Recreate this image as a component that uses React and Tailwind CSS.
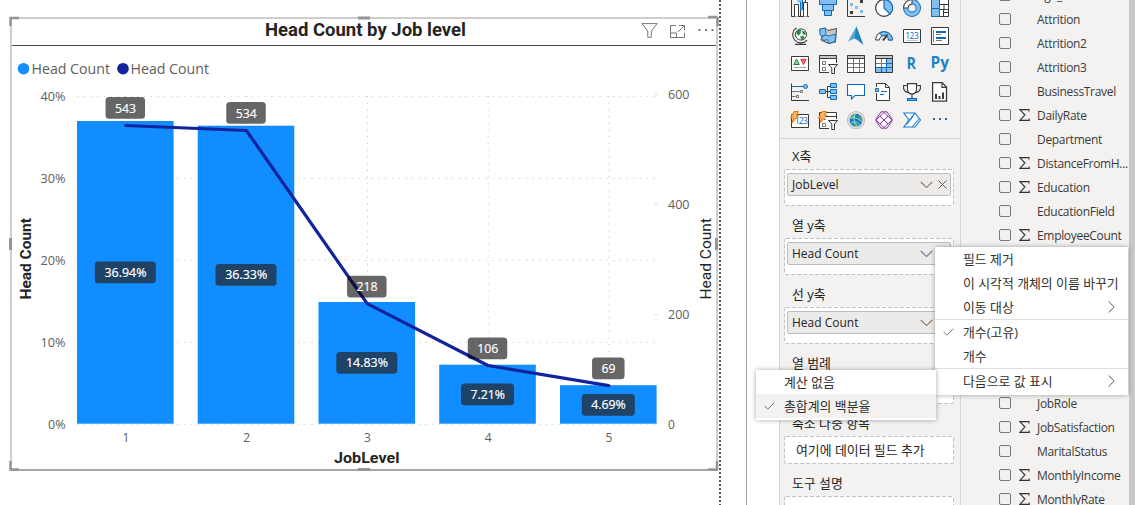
import React from "react";

const UI = "font-['Open_Sans','Noto_Sans_CJK_KR',sans-serif]";
const DARK = "#3b3a39";
const BLUE = "#0f6cbd";
const LIGHT = "#83beec";

/* ---------- visualization gallery icons (18 x 18) ---------- */

const galleryIcons = [
  // ribbon / column
  <g fill="#fff" stroke={DARK}>
    <path d="M.5-1V17.5H18" fill="none" />
    <path d="M3.5 17.5V5.5H7.5V17.5M12.5 17.5V3.5H16.5V17.5M9.5 17.5V11" />
    <path d="M6.5-1H11.5V10H9.5V3.5H6.5Z" fill={LIGHT} stroke="none" />
    <path d="M9.5 3V10.5H11.5V-1" fill="none" stroke={BLUE} />
    <path d="M14.5-1V3.5" />
  </g>,
  // funnel
  <g fill={LIGHT} stroke={BLUE}>
    <path d="M.5-1H17.5V5.5H.5ZM3.5 5.5H14.5V11.5H3.5ZM5.5 11.5H12.5V16.5H5.5Z" />
  </g>,
  // scatter
  <g>
    <path d="M.5 0V17.5H18" fill="none" stroke={DARK} />
    <path d="M13 1h3v3h-3ZM3 12h3v3H3Z" fill={DARK} />
    <path d="M3 4h3v3H3ZM8 7h3v3H8ZM13 11h3v3h-3Z" fill={LIGHT} />
  </g>,
  // pie
  <g stroke={DARK} strokeWidth="1.2">
    <circle cx="9" cy="9" r="8.4" fill="#fff" />
    <path d="M9 .6A8.4 8.4 0 0 1 15 15L9 9Z" fill={LIGHT} stroke={BLUE} />
  </g>,
  // donut
  <g>
    <circle cx="9" cy="9" r="6.3" fill="none" stroke={BLUE} strokeWidth="5.4" />
    <circle cx="9" cy="9" r="6.3" fill="none" stroke={LIGHT} strokeWidth="3.4" />
    <path d="M.6 9A8.4 8.4 0 0 1 9 .6V5A4 4 0 0 0 5 9Z" fill="#fff" stroke={DARK} />
  </g>,
  // treemap
  <g fill="#fff" stroke={DARK}>
    <path d="M.5 .5H17.5V17.5H.5ZM8.5 5.5H17.5M8.5 5V17M13 5.5V10M8.5 10.5H17.5M12.5 10V17M12.5 13.5H17" />
    <path d="M.5-1H8.5V17.5H.5ZM.5 9.5H8.5" fill={LIGHT} stroke={BLUE} />
  </g>,
  // map globe
  <g fill="none" stroke={DARK}>
    <circle cx="10" cy="7.5" r="5.6" fill="#fff" />
    <path d="M7 3.2 10 3 9.5 6 7.5 8.5 5.5 6ZM11.5 4 14 5 14.5 7.5 12 7ZM9.5 9.5 13 9 12.5 12 10.5 12.5Z" fill="#22843f" stroke="#22843f" strokeWidth=".5" />
    <path d="M5.5 .8A8.2 8.2 0 1 0 16 13.2M9 15.5V17M4 17.4H15" strokeWidth="1.1" />
  </g>,
  // filled map
  <g stroke={DARK} strokeWidth=".9">
    <path d="M.5 2.5 6 1 9 3.5 17.5 1.5 16.5 15 9.5 16.5 2 13 3 8.5Z" fill="#c8c6c4" />
    <path d="M.8 2 6 1 7 6.5 4 9.5 1 8ZM10 9 16.8 7 16 14.5 10 16.5 8.5 12.5 5 13.5 2 11 6 8Z" fill={LIGHT} stroke={BLUE} />
  </g>,
  // azure map
  <g>
    <path d="M9.5-.8 1 14.5 9.5 10.5Z" fill="#50a8d8" />
    <path d="M9.5-.8 16.5 18 9.5 12.5 7.5 11.5Z" fill="#2086c4" />
  </g>,
  // gauge
  <g strokeWidth="1">
    <path d="M.6 13A8.4 8.4 0 0 1 17.4 13L13.5 13A4.5 4.5 0 0 0 4.5 13Z" fill="#fff" stroke={DARK} />
    <path d="M4.5 6A8.4 8.4 0 0 1 17.4 13H13.5A4.5 4.5 0 0 0 7 9Z" fill={LIGHT} stroke={BLUE} />
    <path d="M8 13.5 12.5 7.5" stroke={DARK} strokeWidth="2" />
  </g>,
  // card
  <g>
    <path d="M.5 2.5H17.5V15.5H.5Z" fill="#fff" stroke={DARK} />
    <text x="9" y="12" textAnchor="middle" fontSize="8.5" textLength="13.5" fontFamily="Open Sans" fill={BLUE}>123</text>
    <path d="M3 13.5H15" stroke="#a19f9d" strokeWidth=".6" />
  </g>,
  // multi-row card
  <g>
    <path d="M.5 .5H17.5V17.5H.5Z" fill="#fff" stroke={DARK} />
    <path d="M2.5 3V15" stroke="#797775" />
    <path d="M5 5H15M5 11H15" stroke={BLUE} strokeWidth="2" />
    <path d="M5 7.5H10M5 13.5H11" stroke="#797775" />
  </g>,
  // kpi
  <g>
    <path d="M.5 1.5H17.5V15.5H.5Z" fill="#fff" stroke={DARK} />
    <path d="M5.5 4 8.3 9.5H2.7Z" fill="#8fcf9f" stroke="#22843f" />
    <path d="M12.5 9.5 9.8 4.3H15.2Z" fill="#f1707b" stroke="#d13438" />
    <path d="M3 12.5H15" stroke="#797775" strokeWidth=".7" />
  </g>,
  // slicer
  <g fill="#fff" stroke={DARK}>
    <path d="M10 17.5H.5V.5H17.5V8" />
    <path d="M.5 .5H17.5V3.5H.5Z" fill="#c8c6c4" />
    <path d="M3.5 6.5H6.5V9.5H3.5ZM3.5 12.5H6.5V15.5H3.5Z" fill="#fff" stroke="#797775" />
    <path d="M9.5 9.5H18.5L15.5 13V18.5H12.8V13Z" />
  </g>,
  // table
  <g fill="#fff" stroke={DARK}>
    <path d="M.5 .5H17.5V17.5H.5Z" />
    <path d="M.5 .5H17.5V3.5H.5Z" fill="#c8c6c4" />
    <path d="M6.5 4V17M12.5 4V17M1 8.5H17M1 12.5H17" stroke="#797775" />
  </g>,
  // matrix
  <g fill="#fff" stroke={DARK}>
    <path d="M.5 .5H17.5V17.5H.5Z" />
    <path d="M12 4H17V17H1V12.5H12Z" fill={LIGHT} stroke="none" />
    <path d="M.5 .5H17.5V3.5H.5Z" fill="#c8c6c4" />
    <path d="M6.5 4V12M1 8.5H11.5" stroke="#797775" />
    <path d="M1 12.5H17M11.5 4V17M6.5 12.5V17M11.5 8.5H17" stroke={BLUE} />
  </g>,
  // R
  <text x="8.2" y="14.4" textAnchor="middle" fontSize="16.5" fontWeight="700" textLength="9.5" lengthAdjust="spacingAndGlyphs" fontFamily="Open Sans" fill="#1d84c6">R</text>,
  // Py
  <text x="8.7" y="12.6" textAnchor="middle" fontSize="16" fontWeight="700" textLength="18.5" lengthAdjust="spacingAndGlyphs" fontFamily="Open Sans" fill="#1d84c6">Py</text>,
  // key influencers
  <g fill="none" stroke={DARK}>
    <path d="M.5 .5V17.5H18" />
    <path d="M1 3.5H12" stroke={BLUE} />
    <circle cx="14.5" cy="3.5" r="2" fill={LIGHT} stroke={BLUE} />
    <path d="M1 8.5H9M1 13.5H5M9.5 7.5H11.5V9.5H9.5ZM5.5 12.5H7.5V14.5H5.5Z" stroke="#797775" />
  </g>,
  // decomposition tree
  <g>
    <path d="M6 8.5H12M11.5 3.5H8.5V14.5H11.5" fill="none" stroke={DARK} />
    <path d="M.5 6.5H6.5V10.5H.5ZM11.5 .5H17.5V4.5H11.5ZM11.5 6.5H17.5V10.5H11.5ZM11.5 12.5H17.5V16.5H11.5Z" fill={LIGHT} stroke={BLUE} />
  </g>,
  // Q&A
  <path d="M.5 1.5H17.5V12.5H8L4.5 16V12.5H.5Z" fill="#fff" stroke={BLUE} strokeWidth="1.1" />,
  // narrative
  <g fill="#fff" stroke={DARK}>
    <path d="M1.5 4V.5H10.5L14.5 4.5V17.5H1.5V10M10.5 .5V4.5H14.5" />
    <path d="M.5 5.5H3.5V8.5H.5Z" fill={LIGHT} stroke={BLUE} />
    <path d="M6 8.5H12M5 11.5H9" stroke={BLUE} />
  </g>,
  // goals trophy
  <g fill="#fff" stroke={DARK} strokeWidth="1.1">
    <path d="M4.5 2.5H.6V5.5Q1.5 9 5.5 9.5M13.5 2.5H17.4V5.5Q16.5 9 12.5 9.5" fill="none" />
    <path d="M4.5 .6H13.5V7Q12.5 11 9 11Q5.5 11 4.5 7ZM9 11V15" />
    <path d="M4.5 15.5H13.5V17.4H4.5Z" fill={LIGHT} stroke={BLUE} />
  </g>,
  // paginated report
  <g>
    <path d="M1.6-.4H11.2L15.5 4.2V18.2H1.6Z" fill="#fff" stroke={DARK} strokeWidth="1.3" />
    <path d="M11-.4V4.4H15.5" fill="none" stroke={DARK} strokeWidth="1.2" />
    <path d="M4 11H6V16H4ZM7.5 13H9.5V16H7.5ZM11 9.5H13V16H11Z" fill={DARK} />
  </g>,
  // card (new)
  <g>
    <path d="M.5 3.5H17.5V16.5H.5Z" fill="#fff" stroke={DARK} />
    <text x="10.3" y="13" textAnchor="middle" fontSize="9" textLength="13" fontFamily="Open Sans" fill={BLUE}>123</text>
    <path d="M3 .5H7.5L5.5 4H8L1 12 2.5 7H-.5Z" fill="#f8b75a" stroke="#e0720d" strokeWidth=".9" />
  </g>,
  // slicer (new)
  <g fill="#fff" stroke={DARK}>
    <path d="M10 17.5H.5V1.5H17.5V8M5 5.5H17.5" />
    <path d="M3.5 12.5H6.5V15.5H3.5ZM5 8.5H7" stroke="#797775" />
    <path d="M9.5 9.5H18.5L15.5 13V18.5H12.8V13Z" />
    <path d="M3 .5H7.5L5.5 4H8L1 12 2.5 7H-.5Z" fill="#f8b75a" stroke="#e0720d" strokeWidth=".9" />
  </g>,
  // arcgis
  <g>
    <circle cx="9" cy="9.2" r="8.6" fill="#e1dfdd" stroke="#b3b0ad" strokeWidth=".8" />
    <circle cx="9" cy="9.2" r="6.4" fill="#1a7fb8" />
    <path d="M4 5 9 3 8 6 5 8ZM11 4 15 7.5 14.5 11 12 8ZM5 11 9 12.5 12 15 7.5 15Z" fill="#43b05c" />
    <path d="M3 7Q9 5 15 11M4 12Q9 9 13 14M8 3Q5 9 10 15" fill="none" stroke="#cfe8f7" strokeWidth=".7" />
  </g>,
  // power apps
  <g fill="#fff" stroke="#8c3a9b" strokeWidth="1">
    <path d="M6 .8H12L17.5 9 12 17.2H6L.5 9Z" fill="#f6e9f8" />
    <path d="M9 1.5 13 5.2 9 9 5 5.2ZM5 5.2 9 9 5 12.8 1 9ZM13 5.2 17 9 13 12.8 9 9ZM9 9 13 12.8 9 16.6 5 12.8Z" />
  </g>,
  // power automate
  <g fill="#fff" stroke="#1677d2" strokeWidth="1.1">
    <path d="M.8 2H12L17.5 9 12 16H.8L6 9Z" />
    <path d="M6.5 9 12 2.2M3.5 13.5 10 5.5M9.5 15.5 16 8" fill="none" />
  </g>,
  // more
  <g>
    <path d="M2 7h2v2H2ZM8 7h2v2H8ZM14 7h2v2h-2Z" fill="#2b6ca8" />
  </g>,
];

function Gallery() {
  return (
    <div className="h-[139px] shrink-0 overflow-hidden border-b border-[#d8d6d4]">
      <div className="-mt-px ml-[11px] grid w-[158px] grid-cols-6 gap-[10px]">
        {galleryIcons.map((icon, i) => (
          <svg key={i} viewBox="0 0 18 18" className="size-[18px] overflow-visible">{icon}</svg>
        ))}
      </div>
    </div>
  );
}

/* ---------- field wells ---------- */

function Chip({ children, tone }) {
  return (
    <div className="flex h-[23px] items-center rounded-[2px] border border-[#bebbb8] bg-[#edebe9] pl-1 text-[12px] text-[#252423]">
      <span className="mt-px grow">{children}</span>
      <svg viewBox="0 0 13 8" className={`h-2 w-[13px] ${tone}`}>
        <path d="M.8 1 6.5 6.6 12.2 1" fill="none" stroke="currentColor" strokeWidth="1.1" />
      </svg>
      <svg viewBox="0 0 9 9" className="mr-[3.5px] ml-[5px] size-[9px]">
        <path d="M.5 .5 8.5 8.5M8.5 .5.5 8.5" stroke="#605e5c" strokeWidth="1" />
      </svg>
    </div>
  );
}

const Dashed = ({ h }) => (
  <svg className="absolute inset-0 h-full w-full">
    <rect x=".5" y=".5" width="169" height={h - 1} rx="1.5" fill="#fff" stroke="#c4c2c0" strokeDasharray="4 2" />
  </svg>
);

function Well({ label, h, children }) {
  return (
    <>
      <div className="flex h-8 shrink-0 items-center pt-[7px] pl-[8px] text-[12.9px] text-[#252423]">{label}</div>
      <div className={`relative w-[170px] shrink-0 ${h === 37 ? "h-[37px]" : "h-[28px]"}`}>
        <Dashed h={h} />
        <div className="relative px-[3px] pt-1">{children}</div>
      </div>
    </>
  );
}

/* ---------- field list ---------- */

const fieldsTop = [
  ["Age_"], ["Attrition"], ["Attrition2"], ["Attrition3"], ["BusinessTravel"],
  ["DailyRate", true], ["Department"], ["DistanceFromH...", true], ["Education", true],
  ["EducationField"], ["EmployeeCount", true],
];
const fieldsBottom = [
  ["JobRole"], ["JobSatisfaction", true], ["MaritalStatus"], ["MonthlyIncome", true], ["MonthlyRate", true],
];

const FieldRow = ({ name, sum }) => (
  <div className="flex h-6 shrink-0 items-center pl-[38px]">
    <span className="size-3 shrink-0 rounded-[2px] border border-[#7a7876]" />
    <span className="flex w-[26px] shrink-0 pl-2">
      {sum && (
        <svg viewBox="0 0 11 12" className="h-3 w-[11px]">
          <path d="M10 2.5V.6H.8L6 6 .8 11.4H10.2V9.5" fill="none" stroke="#323130" strokeWidth="1.1" />
        </svg>
      )}
    </span>
    <span className="mt-0.5 text-[12px] tracking-[-0.32px] whitespace-nowrap text-[#3b3a39]">{name}</span>
  </div>
);

/* ---------- menus ---------- */

const Check = () => (
  <svg viewBox="0 0 11 8" className="h-2 w-[11px]">
    <path d="M.7 4 3.8 7.2 10.3.7" fill="none" stroke="#797775" strokeWidth="1" />
  </svg>
);

const MenuItem = ({ children, checked, sub, active }) => (
  <div className={`flex h-6 items-center text-[12.9px] whitespace-nowrap text-[#323130] ${active ? "bg-[#f3f2f1]" : ""}`}>
    <span className="flex w-[28px] shrink-0 pl-[8px]">{checked && <Check />}</span>
    <span className="grow pt-0.5">{children}</span>
    {sub && (
      <svg viewBox="0 0 7 12" className="mr-[13px] h-3 w-[7px]">
        <path d="M.6.5 6.2 6 .6 11.5" fill="none" stroke="#605e5c" />
      </svg>
    )}
  </div>
);

/* ---------- combo chart ---------- */

const bars = [
  { x: 77, y: 121, label: "36.94%", ly: 261.5, lw: 61, tw: 42, pt: 125.5, count: "543", cy: 97 },
  { x: 197.7, y: 125.7, label: "36.33%", ly: 264, lw: 61, tw: 42, pt: 130.5, count: "534", cy: 102 },
  { x: 318.5, y: 302, label: "14.83%", ly: 352, lw: 61, tw: 42, pt: 303.7, count: "218", cy: 275.7 },
  { x: 439.2, y: 364.7, label: "7.21%", ly: 383.5, lw: 53, tw: 34.5, pt: 365.5, count: "106", cy: 337.5 },
  { x: 560, y: 385.2, label: "4.69%", ly: 394, lw: 53, tw: 34.5, pt: 385.7, count: "69", cy: 357.5 },
];
const BAR_W = 96.6;
const mid = (b) => b.x + BAR_W / 2;

function Chart() {
  return (
    <svg viewBox="12 46 704 422" className="h-[422px] w-[704px]" fontFamily="Open Sans, sans-serif">
      <g fontSize="14.5" fill="#605e5c">
        <circle cx="23.5" cy="68.7" r="5.8" fill="#118dff" />
        <text x="31.5" y="73.8" textLength="78.5" lengthAdjust="spacingAndGlyphs">Head Count</text>
        <circle cx="123" cy="68.7" r="5.8" fill="#12239e" />
        <text x="130.5" y="73.8" textLength="78.5" lengthAdjust="spacingAndGlyphs">Head Count</text>
      </g>

      <g stroke="#c8c6c4" strokeDasharray="1.2 5.5">
        {[96.3, 178.3, 260.3, 342.3, 424.3].map((y) => <path key={y} d={`M77 ${y}H656`} />)}
        {bars.map((b) => <path key={b.x} d={`M${mid(b) + 0.7} 96V424`} />)}
      </g>
      <path d="M655 94.5h2M655 204.5h2M655 314.5h2" stroke="#d2d0ce" />

      <g fontSize="12" fill="#605e5c">
        {[["40%", 96], ["30%", 178], ["20%", 260], ["10%", 342]].map(([t, y]) => (
          <text key={t} x="40.5" y={y + 4.5} textLength="25" lengthAdjust="spacingAndGlyphs">{t}</text>
        ))}
        <text x="48" y="428.8" textLength="17.5" lengthAdjust="spacingAndGlyphs">0%</text>
        {[["600", 94.7], ["400", 204.7], ["200", 314.7]].map(([t, y]) => (
          <text key={t} x="668" y={y + 4.5} textLength="21.5" lengthAdjust="spacingAndGlyphs">{t}</text>
        ))}
        <text x="668" y="428.8">0</text>
        {bars.map((b, i) => <text key={i} x={mid(b) + 0.7} y="442" textAnchor="middle">{i + 1}</text>)}
      </g>

      {bars.map((b) => <rect key={b.x} x={b.x} y={b.y} width={BAR_W} height={423.7 - b.y} fill="#118dff" />)}
      <polyline
        points={bars.map((b) => `${mid(b) + 0.4},${b.pt}`).join(" ")}
        fill="none" stroke="#12239e" strokeWidth="3.2" strokeLinejoin="round" strokeLinecap="round"
      />

      {bars.map((b) => {
        const c = mid(b);
        const w = b.count.length === 3 ? 39.5 : 32.5;
        return (
          <g key={b.x} fontSize="12" fill="#fff" textAnchor="middle">
            <rect x={c - b.lw / 2} y={b.ly} width={b.lw} height="21.7" rx="3.5" fill="#1f4366" />
            <text x={c + 0.2} y={b.ly + 15.3} textLength={b.tw} lengthAdjust="spacingAndGlyphs" stroke="#fff" strokeWidth=".2">{b.label}</text>
            <rect x={c - w / 2} y={b.cy} width={w} height="21.7" rx="3.5" fill="#000" fillOpacity=".6" />
            <text x={c + 0.2} y={b.cy + 15.5} textLength={b.count.length * 7} lengthAdjust="spacingAndGlyphs" stroke="#fff" strokeWidth=".2">{b.count}</text>
          </g>
        );
      })}

      <g fontFamily="Roboto, sans-serif" fontSize="15.5" fill="#252423">
        <text x="334" y="463" fontWeight="700" textLength="65.5" lengthAdjust="spacingAndGlyphs">JobLevel</text>
        <text transform="translate(31.3 299.5) rotate(-90)" fontWeight="700" textLength="81.5" lengthAdjust="spacingAndGlyphs">Head Count</text>
        <text transform="translate(711 299.5) rotate(-90)" textLength="81.5" lengthAdjust="spacingAndGlyphs">Head Count</text>
      </g>
    </svg>
  );
}

function Visual() {
  return (
    <div className="relative h-[454px] w-[708px] border-2 border-[#cfcdcb] border-b-[#a8a6a4] bg-white">
      <div className="flex h-[27px] items-center border-b border-[#4a4846]">
        <div className="w-[253px]" />
        <svg viewBox="0 0 202 26" className="h-[26px] w-[202px] shrink-0">
          <text x="0" y="17.3" fontFamily="Roboto, sans-serif" fontSize="18.5" fontWeight="700" textLength="201" lengthAdjust="spacingAndGlyphs" fill="#252423">Head Count by Job level</text>
        </svg>
        <svg viewBox="0 0 17 15" className="-mt-1 ml-[174px] h-[15px] w-[17px]">
          <path d="M.8.6H16.2L10.3 8V14.3H6.8V8Z" fill="none" stroke="#797775" strokeWidth="1" />
        </svg>
        <svg viewBox="0 0 15 13" className="-mt-0.5 ml-3 h-[13px] w-[15px]">
          <path d="M6 .5H.5V12.5H14.5V8M.5 8H6.5V12.5M9 .5H14.5V5.5M14 1 8 7" fill="none" stroke="#797775" />
        </svg>
        <svg viewBox="0 0 16 4" className="-mt-1 ml-[13px] h-1 w-4">
          <path d="M.5 1h2v2h-2ZM7 1h2v2H7ZM13.5 1h2v2h-2Z" fill="#797775" />
        </svg>
      </div>
      <Chart />
      <svg viewBox="0 0 710 456" className="pointer-events-none absolute -top-[3px] -left-[3px] h-[456px] w-[710px] overflow-visible">
        <path d="M1.5 10V2H10M1.5 445V453.5H10M699 1H708.5M708 445V453.5H699M708.5 1V10" fill="none" stroke="#979593" strokeWidth="2.5" />
        <path d="M349 2H361M349 453.5H361M1.5 222V234M707.5 222V234" stroke="#979593" strokeWidth="3" />
      </svg>
    </div>
  );
}

export default function App() {
  return (
    <div className={`relative flex h-[505px] w-[1135px] overflow-hidden bg-white ${UI}`}>
      <main className="flex w-[747px] shrink-0 border-r border-[#a6a4a2] pl-[10px]">
        <div className="w-[709px] shrink-0 pt-[17px]">
          <Visual />
        </div>
        <div className="h-full w-[2px] bg-[repeating-linear-gradient(to_bottom,#5a5856_0_2px,transparent_2px_4px)]" />
      </main>

      <aside className="ml-8 flex w-[182px] shrink-0 flex-col overflow-hidden border-x border-[#d8d6d4] bg-[#f3f2f1]">
        <Gallery />
        <div className="-mt-0.5 flex flex-col pl-1">
          <Well label="X축" h={37}><Chip tone="text-[#8f7563]">JobLevel</Chip></Well>
          <Well label="열 y축" h={37}><Chip tone="text-[#5f7f9c]">Head Count</Chip></Well>
          <Well label="선 y축" h={37}><Chip tone="text-[#8f7563]">Head Count</Chip></Well>
          <Well label="열 범례" h={28} />
          <Well label="축소 다중 항목" h={28}>
            <div className="flex h-5 items-center pt-0.5 pl-[9px] text-[12.9px] text-[#252423]">여기에 데이터 필드 추가</div>
          </Well>
          <Well label="도구 설명" h={28} />
        </div>
      </aside>

      <aside className="w-[168px] shrink-0 overflow-hidden bg-[#f3f2f1]">
        <div className="-mt-[17px] flex flex-col">
          {fieldsTop.map(([n, s]) => <FieldRow key={n} name={n} sum={s} />)}
          <div className="h-36 shrink-0" />
          {fieldsBottom.map(([n, s]) => <FieldRow key={n} name={n} sum={s} />)}
        </div>
      </aside>
      <div className="w-[6px] shrink-0 bg-[#c8c8c8]" />

      <div className="absolute top-[247px] left-[935px] h-[148px] w-[193px] bg-white shadow-[0_0_5px_rgba(0,0,0,0.35)]">
        <MenuItem>필드 제거</MenuItem>
        <MenuItem>이 시각적 개체의 이름 바꾸기</MenuItem>
        <MenuItem sub>이동 대상</MenuItem>
        <div className="h-px bg-[#e1dfdd]" />
        <MenuItem checked>개수(고유)</MenuItem>
        <MenuItem>개수</MenuItem>
        <div className="h-px bg-[#e1dfdd]" />
        <MenuItem sub>다음으로 값 표시</MenuItem>
      </div>

      <div className="absolute top-[370px] left-[756px] h-[50px] w-[180px] bg-white shadow-[0_0_5px_rgba(0,0,0,0.35)]">
        <MenuItem>계산 없음</MenuItem>
        <MenuItem checked active>총합계의 백분율</MenuItem>
      </div>
    </div>
  );
}
